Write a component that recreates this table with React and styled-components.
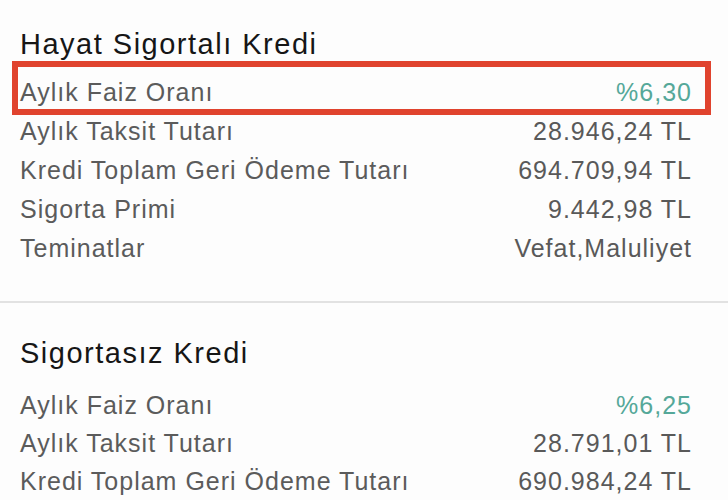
import React from "react";
import styled, { createGlobalStyle } from "styled-components";

const GlobalStyle = createGlobalStyle`
	html, body {
		margin: 0;
		padding: 0;
		background: #fdfdfd;
	}
	body {
		font-family: "Liberation Sans", Arial, sans-serif;
		-webkit-font-smoothing: antialiased;
	}
`;

const loans = [
	{
		title: "Hayat Sigortalı Kredi",
		rows: [
			{ label: "Aylık Faiz Oranı", value: "%6,30", rate: true, marked: true },
			{ label: "Aylık Taksit Tutarı", value: "28.946,24 TL" },
			{ label: "Kredi Toplam Geri Ödeme Tutarı", value: "694.709,94 TL" },
			{ label: "Sigorta Primi", value: "9.442,98 TL" },
			{ label: "Teminatlar", value: "Vefat,Maluliyet" },
		],
	},
	{
		title: "Sigortasız Kredi",
		rows: [
			{ label: "Aylık Faiz Oranı", value: "%6,25", rate: true },
			{ label: "Aylık Taksit Tutarı", value: "28.791,01 TL" },
			{ label: "Kredi Toplam Geri Ödeme Tutarı", value: "690.984,24 TL" },
		],
	},
];

const Page = styled.div`
	width: 728px;
	height: 500px;
	overflow: hidden;
	background: #fdfdfd;
`;

const Card = styled.section`
	padding: ${(p) => (p.first ? "27px" : "33px")} 37px 33px 20px;
	border-bottom: ${(p) => (p.first ? "2px solid #e2e2e2" : "none")};
`;

const Title = styled.h2`
	margin: 0 0 ${(p) => (p.first ? "12px" : "16px")};
	font-size: 29px;
	line-height: 34px;
	font-weight: 400;
	letter-spacing: 1.5px;
	color: #161616;
`;

const Row = styled.div`
	position: relative;
	display: flex;
	justify-content: space-between;
	align-items: baseline;
	font-size: 25px;
	line-height: ${(p) => (p.tight ? "38px" : "39px")};
	letter-spacing: 1px;
	color: #5b5b5b;

	&::after {
		content: "";
		display: ${(p) => (p.marked ? "block" : "none")};
		position: absolute;
		top: -12px;
		bottom: -3px;
		left: -8px;
		right: -20px;
		border: 6.5px solid #e0432e;
		pointer-events: none;
	}
`;

const Label = styled.span`
	white-space: nowrap;
`;

const Value = styled.span`
	white-space: nowrap;
	margin-right: -1px;
	color: ${(p) => (p.rate ? "#55a899" : "#595959")};
`;

export default function App() {
	return (
		<Page>
			<GlobalStyle />
			{loans.map((loan, i) => (
				<Card key={loan.title} first={i === 0}>
					<Title first={i === 0}>{loan.title}</Title>
					{loan.rows.map((row) => (
						<Row key={row.label} marked={row.marked} tight={i > 0}>
							<Label>{row.label}</Label>
							<Value rate={row.rate}>{row.value}</Value>
						</Row>
					))}
				</Card>
			))}
		</Page>
	);
}
